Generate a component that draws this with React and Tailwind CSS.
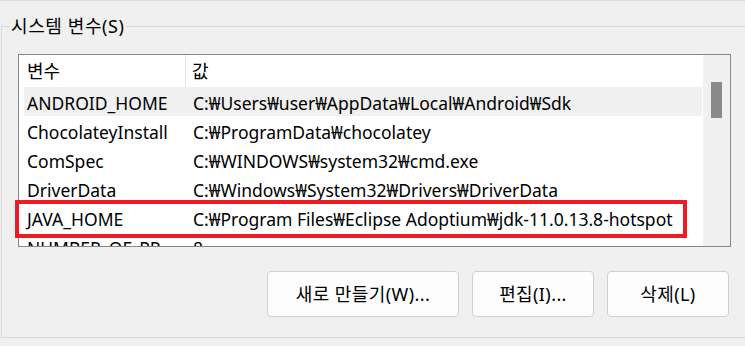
import React from 'react';

const rows = [
  { name: 'ANDROID_HOME', value: 'C:₩Users₩user₩AppData₩Local₩Android₩Sdk', hover: true },
  { name: 'ChocolateyInstall', value: 'C:₩ProgramData₩chocolatey' },
  { name: 'ComSpec', value: 'C:₩WINDOWS₩system32₩cmd.exe' },
  { name: 'DriverData', value: 'C:₩Windows₩System32₩Drivers₩DriverData' },
  { name: 'JAVA_HOME', value: 'C:₩Program Files₩Eclipse Adoptium₩jdk-11.0.13.8-hotspot' },
  { name: 'NUMBER_OF_PR', value: '8' },
];

function Button({ children, className }) {
  return (
    <button
      className={cn(
        'h-[46px] rounded-[4px] border border-[#d0d0d0] bg-[#fdfdfd] text-[18px] tracking-[0.4px] text-black',
        className,
      )}
    >
      {children}
    </button>
  );
}

export default function App() {
  return (
    <div
      className="w-[745px] h-[346px] overflow-hidden bg-[#f0f0f0] border-t border-[#dcdcdc]"
      style={{ fontFamily: '"Noto Sans", "Noto Sans CJK KR", sans-serif' }}
    >
      <fieldset className="relative ml-[1px] mt-[13px] w-[800px] h-[324px] border border-[#d9d9d9]">
        <legend className="ml-[8px] px-[1px] text-[18px] tracking-[0.6px] leading-[24px] text-black">시스템 변수(S)</legend>

        {/* variable list */}
        <div className="relative ml-[16px] mt-[16px] w-[713px] h-[193px] border border-[#828790] bg-white flex">
          <div className="w-[684px] overflow-hidden">
            <div className="flex h-[32px] items-center ml-[5px] text-[18px]">
              <div className="w-[162px] pl-[3px] h-full flex items-center border-r border-[#e5e5e5]">변수</div>
              <div className="pl-[6px]">값</div>
            </div>
            {rows.map((r) => (
              <div
                key={r.name}
                className={cn(
                  'flex h-[29px] items-center pt-[3px] ml-[5px] w-[678px] text-[17.5px] whitespace-nowrap',
                  r.hover && 'bg-[#f0f0f0]',
                )}
              >
                <div className="w-[162px] pl-[3px] overflow-hidden">{r.name}</div>
                <div className="pl-[7px]">{r.value}</div>
              </div>
            ))}
          </div>
          {/* scrollbar */}
          <div className="w-[27px] bg-[#f0f0f0] pt-[27px] pl-[8px]">
            <div className="w-[11px] h-[36px] bg-[#8a8a8a]" />
          </div>
          {/* highlight */}
          <div className="absolute left-[-4px] top-[145px] w-[672px] h-[38px] border-4 border-[#ed1c24]" />
        </div>

        <div className="flex gap-[13px] ml-[265px] mt-[24px]">
          <Button className="w-[192px]">새로 만들기(W)...</Button>
          <Button className="w-[122px]">편집(I)...</Button>
          <Button className="w-[122px]">삭제(L)</Button>
        </div>
      </fieldset>
    </div>
  );
}

function cn(...classes) {
  return classes.filter(Boolean).join(' ');
}
